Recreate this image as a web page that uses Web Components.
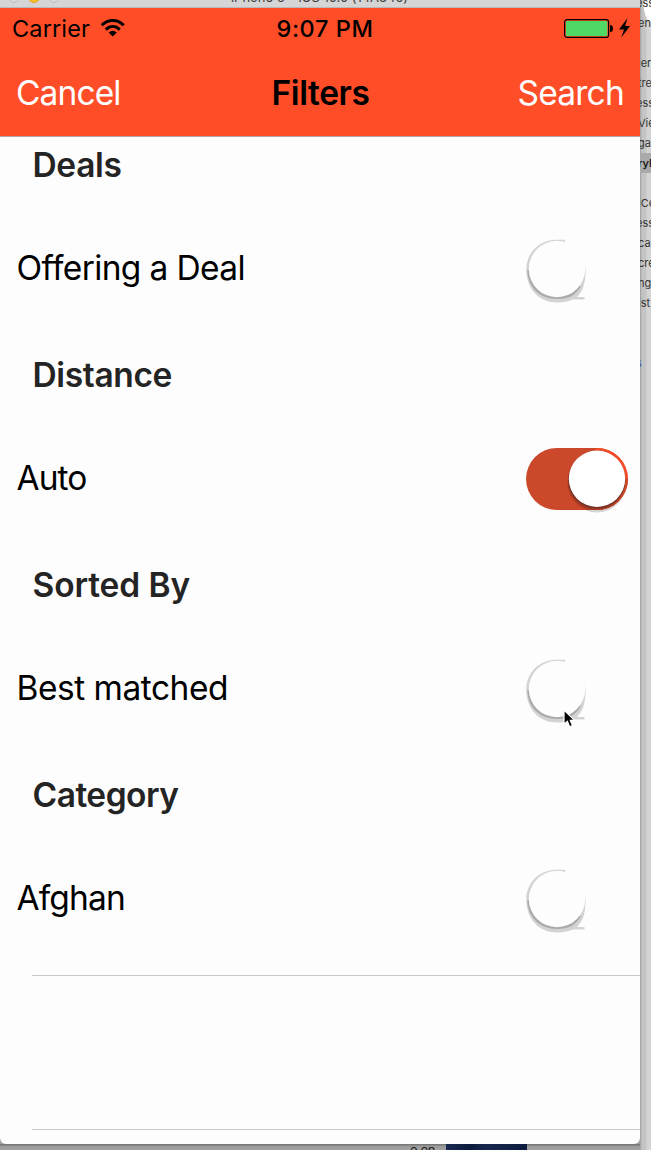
<!DOCTYPE html>
<html lang="en">
<head>
<meta charset="utf-8">
<title>Filters</title>
<style>
html,body{margin:0;height:1150px;overflow:hidden;background:#d4d4d4;font-family:Inter,"Liberation Sans",sans-serif}
</style>
</head>
<body>
<filters-desktop></filters-desktop>
<script>
const define = (name, html, ready) => customElements.define(name, class extends HTMLElement {
  connectedCallback() {
    if (this.shadowRoot) return;
    this.attachShadow({mode: 'open'}).innerHTML = html;
    if (ready) ready(this, this.shadowRoot);
  }
});

// A single line of text tracked to a given advance width.
define('tracked-text', `<style>
:host{display:block;white-space:pre;flex:none}
span{display:inline-block}
</style><span><slot></slot></span>`, (el, root) => {
  const span = root.querySelector('span');
  const target = Number(el.getAttribute('width'));
  span.style.letterSpacing = '0';
  span.style.letterSpacing = (target - span.getBoundingClientRect().width) / el.textContent.length + 'px';
});

define('filter-switch', `<style>
:host{display:block;width:102px;height:66px;flex:none}
svg{display:block}
.on,.off{display:none}
:host([on]) .on,:host(:not([on])) .off{display:block}
</style>
<svg class="off" width="102" height="66" viewBox="0 0 102 66">
  <path d="M39 1.800H30C13 2 .3 15 .3 31.500C.3 51 13 64.500 31 64.500C39 64.500 44 62.500 47 61.500H58.500V59H51C57 53 60 44 59.500 30L58 24L50 10L39 4Z" fill="#d3d3d3"/>
  <path d="M1.300 32C2 50 14 61 31 61C43 61 50 57 55 48L30 40Z" fill="#aaa"/>
  <circle cx="31" cy="31" r="28.200" fill="#fdfdfd"/>
  <path d="M39 3.200V0H62V24H57Z" fill="#fdfdfd"/>
</svg>
<svg class="on" width="102" height="66" viewBox="0 0 102 66">
  <circle cx="71" cy="35" r="29.500" fill="#d4d4d4"/>
  <rect width="102" height="62" rx="31" fill="#cb482a"/>
  <clipPath id="track"><rect width="102" height="62" rx="31"/></clipPath>
  <g clip-path="url(#track)">
    <circle cx="71" cy="31" r="31" fill="#ff4d27"/>
    <path d="M43 21L71 0H38V64H72C92 64 103 47 102 30H99L80 2L70 1Z" fill="#cb482a"/>
    <path d="M70 1C86 1 98 12 100.500 28" fill="none" stroke="#f04c29" stroke-width="2"/>
    <circle cx="70" cy="34.500" r="28.500" fill="#a83a22"/>
    <circle cx="70.800" cy="32" r="28.600" fill="#763126"/>
  </g>
  <circle cx="71" cy="30.800" r="28.200" fill="#fff"/>
</svg>`);

define('filter-section', `<style>
:host{display:block;height:210px;box-sizing:border-box}
header{height:56px;padding:1px 0 0 32.500px;box-sizing:border-box;font-size:33.500px;font-weight:600;line-height:56px;color:#242424}
.cell{height:154px;padding:0 12px 0 16.500px;box-sizing:border-box;display:flex;justify-content:space-between;align-items:center;font-size:33.500px;line-height:40px;color:#000}
.label{margin-top:-3px}
filter-switch{margin-top:4px}
:host([last]) .cell{background:linear-gradient(#c8c8c8,#c8c8c8) 32px 100%/100% 1px no-repeat}
</style>
<header><slot name="title"></slot></header>
<div class="cell"><div class="label"><slot></slot></div><filter-switch></filter-switch></div>`, (el, root) => {
  if (el.hasAttribute('on')) root.querySelector('filter-switch').setAttribute('on', '');
});

define('status-bar', `<style>
:host{display:grid;grid-template-columns:1fr auto 1fr;align-items:center;height:40px;font-size:23.500px;line-height:30px;color:#000}
.left,.right{display:flex;align-items:center}
.left{padding-left:12px;gap:10px}
.right{justify-content:flex-end;padding-right:9px}
.time{font-weight:500;position:relative;left:5px}
tracked-text{padding-top:2px}
svg{display:block}
</style>
<div class="left"><tracked-text width="78">Carrier</tracked-text>
<svg width="26" height="20" viewBox="0 0 26 20"><g fill="none" stroke="#000" stroke-width="3"><path d="M1.800 7.300C8 .8 17.500 .8 23.700 7.300"/><path d="M5.800 11.600C10 7.600 15.500 7.600 19.700 11.600"/></g><path d="M8.700 14.400Q12.700 11.300 16.800 14.400L12.700 18.500Z"/></svg></div>
<div class="time"><tracked-text width="97">9:07 PM</tracked-text></div>
<div class="right"><svg width="68" height="22" viewBox="0 0 68 22"><rect x="1.600" y="2.600" width="44" height="17.800" rx="2.500" fill="none" stroke="#000" stroke-width="1.200"/><rect x="3" y="4" width="41.300" height="15" rx="1" fill="#4fd964"/><path d="M47 8q3 0 3 3.500t-3 3.500z"/><path d="M64.500 1L56 12.500H61L58.300 20.500L67 9H62.200Z"/></svg></div>`);

define('nav-bar', `<style>
:host{display:flex;justify-content:space-between;align-items:center;height:88px;padding:1px 16px 0;box-sizing:border-box;font-size:33.500px;line-height:40px;color:#fff}
.title{font-weight:600;color:#000;padding-left:3px}
</style>
<tracked-text width="104.5">Cancel</tracked-text>
<tracked-text class="title" width="98">Filters</tracked-text>
<tracked-text width="106.5">Search</tracked-text>`);

define('phone-window', `<style>
:host{display:block;width:640px;height:1150px;overflow:hidden}
.bar{height:8px;display:flex;overflow:hidden;background:#d5d5d5;border-bottom:1px solid #b9b9b9;box-sizing:border-box}
.lights{display:flex;gap:8px;margin:-9px 171px 0 8px}
.lights i{width:12px;height:12px;box-sizing:border-box;border-radius:6px;border:1px solid #bcbcbc;background:#d8d8d8}
.lights i:nth-child(2){background:#fdbe2d;border-color:#dfa226}
.bar tracked-text{font-size:13px;line-height:16px;margin-top:-11px;color:#3d3d3d}
.head{background:#ff4d27;height:128px}
.body{height:1008px;background:#fdfdfd;box-shadow:inset 0 1px #b3a6a2;border-radius:0 0 6px 6px;box-sizing:border-box}
.empty{height:154px;background:linear-gradient(#c8c8c8,#c8c8c8) 32px 100%/100% 1px no-repeat}
.under{height:6px;background:linear-gradient(#777 1px,#999 2px,#a3a3a3);display:flex;overflow:hidden;font-size:13px;line-height:14px;color:#222}
.under tracked-text{margin:-1px 0 0 410px}
.under b{width:81px;height:6px;margin-left:11px;background:linear-gradient(90deg,#1b2a50,#0a1b3d 30%,#18264d 50%,#0b1b3d)}
</style>
<div class="bar"><div class="lights"><i></i><i></i><i></i></div><tracked-text width="177">iPhone 6 – iOS 10.0 (14A345)</tracked-text></div>
<div class="head"><status-bar></status-bar><nav-bar></nav-bar></div>
<div class="body">
<filter-section><tracked-text slot="title" width="89">Deals</tracked-text><tracked-text width="228.5">Offering a Deal</tracked-text></filter-section>
<filter-section on><tracked-text slot="title" width="139.5">Distance</tracked-text><tracked-text width="70">Auto</tracked-text></filter-section>
<filter-section><tracked-text slot="title" width="157.5">Sorted By</tracked-text><tracked-text width="211.5">Best matched</tracked-text></filter-section>
<filter-section last><tracked-text slot="title" width="146">Category</tracked-text><tracked-text width="108.5">Afghan</tracked-text></filter-section>
<div class="empty"></div>
</div>
<div class="under"><tracked-text width="25">e on</tracked-text><b></b></div>`);

define('side-list', `<style>
:host{display:block;width:11px;height:1150px;overflow:hidden;font-size:11px;line-height:20px;color:#333;background:radial-gradient(ellipse 9px 26px at 100% 0,#fff 80%,transparent 90%),linear-gradient(90deg,#999 0,#b4b4b4 1px,#c3c3c3 2px,#c5c5c5 6px,#d4d4d4 7px)}
.rows{margin-top:-7px}
.rows div{height:20px;white-space:pre;text-indent:-2px;width:20px}
.rows .sel{background:#aaa;font-weight:600;color:#222}
.rows .link{color:#3a5fa8;text-indent:-4px}
.rows .far{text-indent:-4px}
</style>
<div class="rows"><div class="far">ess</div><div>en</div><div></div><div>ier</div><div>tre</div><div class="far">ess</div><div>Vie</div><div>gat</div><div class="sel">ryb</div><div></div><div>iCe</div><div class="far">ess</div><div>ca</div><div>cre</div><div>ng</div><div>ist</div><div></div><div></div><div class="link">s</div></div>`);

define('filters-desktop', `<style>
:host{display:flex;width:651px;height:1150px;overflow:hidden;position:relative;background:#a0a0a0}
.cursor{position:absolute;left:563px;top:709px}
</style>
<phone-window></phone-window><side-list></side-list>
<svg class="cursor" width="14" height="20" viewBox="0 0 14 20"><path d="M1 1V15.200L4.400 12.200L6.600 17.700L9.500 16.500L7.200 11.300H11.500Z" fill="#000" stroke="#fff" stroke-width="1.200"/></svg>`);
</script>
</body>
</html>
